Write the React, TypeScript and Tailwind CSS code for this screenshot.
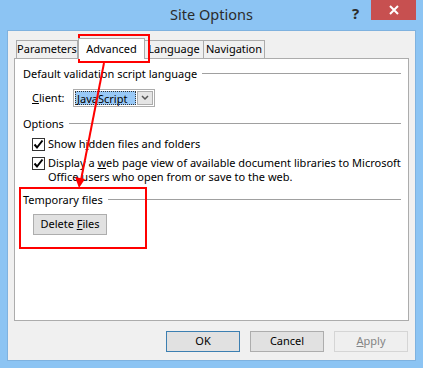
import React from 'react';

const font = "font-['Segoe_UI','Noto_Sans',sans-serif]";

function Check() {
  return (
    <span className="mt-[1px] flex h-[13px] w-[13px] shrink-0 items-center justify-center border border-[#333333] bg-white">
      <svg width="11" height="11" viewBox="0 0 11 11">
        <path d="M1.5 5.5 L4 8.5 L9.5 1.5" fill="none" stroke="#000" strokeWidth="2" />
      </svg>
    </span>
  );
}

function GroupTitle({ children }: { children: React.ReactNode }) {
  return (
    <div className="flex items-center gap-[5px] leading-[15px]">
      <span className="whitespace-nowrap">{children}</span>
      <span className="h-px flex-1 bg-[#a0a0a0]" />
    </div>
  );
}

export default function App() {
  return (
    <div className={`relative h-[368px] w-[423px] overflow-hidden bg-[#8cc4f3] text-[11px] text-black ${font}`}>
      {/* title bar */}
      <div className="relative flex h-[30px] items-center justify-center">
        <span className="text-[14.5px] text-[#2b2b2b]">Site Options</span>
        <span className="absolute left-[352px] top-[2px] text-[15px] font-bold text-[#2b2b2b]">?</span>
        <div className="absolute left-[371px] top-0 flex h-[20px] w-[45px] items-center justify-center bg-[#c75050]">
          <svg width="10" height="10" viewBox="0 0 10 10">
            <path d="M1 1 L9 9 M9 1 L1 9" stroke="#fff" strokeWidth="2" />
          </svg>
        </div>
      </div>

      {/* dialog body */}
      <div className="ml-[7px] h-[331px] w-[409px] border border-[#7fb2df] bg-[#f0f0f0] px-[6px] pt-[7px]">
        {/* tabs */}
        <div className="flex h-[20px] items-end pl-[2px]">
          <div className="flex h-[18px] w-[62px] items-center justify-center border border-b-0 border-[#acacac] bg-[#f0f0f0]">Parameters</div>
          <div className="relative z-10 -mb-px flex h-[21px] w-[67px] items-start justify-center border border-b-0 border-[#acacac] bg-white pt-[2px]">Advanced</div>
          <div className="flex h-[18px] w-[59px] items-center justify-center border border-b-0 border-l-0 border-[#acacac] bg-[#f0f0f0]">Language</div>
          <div className="flex h-[18px] w-[61px] items-center justify-center border border-b-0 border-l-0 border-[#acacac] bg-[#f0f0f0]">Navigation</div>
        </div>

        {/* panel */}
        <div className="h-[263px] border border-[#acacac] bg-white pl-[8px] pr-[7px] pt-[7px]">
          <GroupTitle>Default validation script language</GroupTitle>
          <div className="ml-[9px] mt-[8px] flex items-center gap-[11px]">
            <span className="w-[30px]">
              <span className="underline">C</span>lient:
            </span>
            <div className="flex h-[18px] w-[82px] items-center border border-[#acacac] bg-white p-px">
              <span className="flex h-full flex-1 items-center border border-dotted border-[#333] bg-[#99c9f7] pl-px leading-none">JavaScript</span>
              <span className="ml-px flex h-full w-[16px] items-center justify-center border border-[#acacac] bg-[#e5e5e5]">
                <svg width="8" height="6" viewBox="0 0 8 6">
                  <path d="M1 1 L4 4 L7 1" fill="none" stroke="#555" strokeWidth="1.5" />
                </svg>
              </span>
            </div>
          </div>

          <div className="mt-[9px]">
            <GroupTitle>Options</GroupTitle>
          </div>
          <div className="ml-[9px] mt-[6px] flex flex-col gap-[5px] leading-[14px]">
            <div className="flex items-start gap-[3px]">
              <Check />
              <span className="whitespace-nowrap">
                Show h<span className="underline">i</span>dden files and folders
              </span>
            </div>
            <div className="flex items-start gap-[3px]">
              <Check />
              <span className="whitespace-nowrap">
                Display a <span className="underline">w</span>eb page view of available document libraries to Microsoft
                <br />
                Office users who open from or save to the web.
              </span>
            </div>
          </div>

          <div className="mt-[8px]">
            <GroupTitle>Temporary files</GroupTitle>
          </div>
          <button className="ml-[10px] mt-[7px] flex h-[21px] w-[74px] items-center justify-center border border-[#adadad] bg-[#e1e1e1]">
            <span className="whitespace-nowrap">
              Delete <span className="underline">F</span>iles
            </span>
          </button>
        </div>

        {/* dialog buttons */}
        <div className="mt-[10px] flex justify-end gap-[10px] pr-[1px]">
          <button className="flex h-[21px] w-[74px] items-center justify-center border border-[#3c7fb1] bg-[#e1e1e1]">OK</button>
          <button className="flex h-[21px] w-[74px] items-center justify-center border border-[#adadad] bg-[#e1e1e1]">Cancel</button>
          <button className="flex h-[21px] w-[74px] items-center justify-center border border-[#d5d5d5] bg-[#efefef] text-[#838383]">
            <span>
              <span className="underline">A</span>pply
            </span>
          </button>
        </div>
      </div>

      {/* annotation overlay */}
      <svg className="pointer-events-none absolute left-0 top-0" width="423" height="368" viewBox="0 0 423 368">
        <rect x="79" y="35" width="70" height="27" fill="none" stroke="#ff0000" strokeWidth="2" />
        <rect x="20" y="188" width="126" height="60" fill="none" stroke="#ff0000" strokeWidth="2" />
        <line x1="104" y1="63" x2="81" y2="180" stroke="#ff0000" strokeWidth="2" />
        <path d="M75 177 L79 188 L85 179 Z" fill="#ff0000" />
      </svg>
    </div>
  );
}
